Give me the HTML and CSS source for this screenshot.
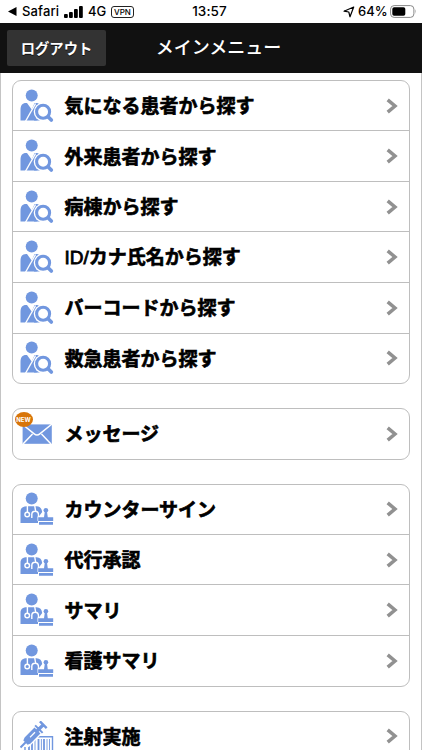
FILE: index.html
```
<!DOCTYPE html>
<html lang="ja">
<head>
<meta charset="utf-8">
<title>メインメニュー</title>
<link rel="stylesheet" href="styles.css">
</head>
<body>
<svg class="defs" aria-hidden="true">
  <symbol id="search" viewBox="0 0 34 34">
    <circle cx="11.7" cy="6.6" r="6"/>
    <path d="M.5 31.5V21C.5 16.5 2.2 14 6.2 14H7L11.7 20.5 14.6 14H16C17.8 14 19 14.6 20 15.5V31.5Z"/>
    <path class="gap" d="M5.4 32.5L15.6 14.5"/>
    <circle class="halo" cx="23.1" cy="22.8" r="9.4"/>
    <circle class="ring" cx="23.1" cy="22.8" r="6.5"/>
    <path d="M14 28.5Q15.5 31 18 31.5H14Z"/>
    <path class="handle" d="M28.3 28L31.3 31"/>
  </symbol>
  <symbol id="doctor" viewBox="0 0 34 34">
    <circle cx="11.7" cy="6.6" r="6"/>
    <path d="M.5 31V19.5C.5 16 3 14.3 7 14.3H16.5C20 14.5 21.8 16.5 22.2 20L18.5 25V31Z"/>
    <path class="steth" d="M7.4 13.5V20M14.7 13.5L15.6 19M11.8 26V22.5Q11.8 19.3 15 19.3Q18.5 19.3 18.5 23V25.5"/>
    <circle class="steth" cx="7.2" cy="22.5" r="2.3"/>
    <path class="outline" d="M18.5 28V25.6H24.3L25 20.5A2.6 2.6 0 1 1 27.2 20.5L27.9 25.6H33V28H32.5V32.7H19V28Z"/>
    <circle cx="25.9" cy="18.2" r="2.3"/>
    <path d="M24.9 19H26.9L27.8 25.3H33.2V28.9H18.2V25.3H24ZM19 30H33V32.7H19Z"/>
  </symbol>
  <symbol id="mail" viewBox="0 0 34 34">
    <path d="M2.6 7.4H31.8V26.8H2.6Z"/>
    <path class="mailline" d="M2 7L14.2 16.8Q17 19 19.8 16.8L32 7M3 27L12.5 17M31 27L21.5 17"/>
  </symbol>
  <symbol id="inject" viewBox="0 0 34 40">
    <path class="frame" d="M10 15.8H32.5V39H5V26"/>
    <path class="bars" d="M9 24V38M12 20V38M18.5 18V38M24 18V38"/>
    <path class="thin" d="M15 18V38M21.4 18V38M27 18V38M29.5 18V38"/>
    <g transform="translate(.5 26.5) rotate(-45)">
      <path class="outline" d="M7 -4.5H24V4.5H7Z"/>
      <path d="M0 -1H7V-3L10 -4.2H24V4.2H10L7 3V1H0ZM24 -1.7H31V1.7H24ZM25 -5.3H27V5.3H25ZM31 -4.8H33.4V4.8H31Z"/>
      <path class="tick" d="M14 -.5H21"/>
    </g>
  </symbol>
  <symbol id="arrow" viewBox="0 0 12 16"><path d="M1.7 1.8L9 8L1.7 14.2"/></symbol>
</svg>

<header class="status">
  <div class="carrier">
    <svg class="back" viewBox="0 0 9 9"><path d="M0 4.5L8.5 0V9Z"/></svg>
    <span class="app">Safari</span>
    <svg class="signal" viewBox="0 0 19 12"><rect y="8" width="3.8" height="4" rx="1"/><rect x="5" y="6" width="3.8" height="6" rx="1"/><rect x="10" y="3" width="3.8" height="9" rx="1"/><rect x="15" width="3.8" height="12" rx="1"/></svg>
    <span class="net">4G</span>
    <span class="vpn">VPN</span>
  </div>
  <div class="time">13:57</div>
  <div class="power">
    <svg class="loc" viewBox="0 0 12 12"><path d="M1 5.2L10.7 1L7 10.8L5.8 6Z"/></svg>
    <span class="percent">64%</span>
    <svg class="battery" viewBox="0 0 27 13"><rect class="shell" x=".6" y=".6" width="23.3" height="11.8" rx="3.5"/><rect x="2.3" y="2.3" width="13" height="8.4" rx="1.8"/><path class="cap" d="M25.2 4.3Q26.6 6.5 25.2 8.7Z"/></svg>
  </div>
</header>

<div class="page">
  <nav class="bar">
    <button class="logout">ログアウト</button>
    <h1 class="title">メインメニュー</h1>
  </nav>
  <main class="menu">
    <ul class="group">
      <li class="row"><svg class="icon"><use href="#search"/></svg><span class="label">気になる患者から探す</span><svg class="arrow"><use href="#arrow"/></svg></li>
      <li class="row"><svg class="icon"><use href="#search"/></svg><span class="label">外来患者から探す</span><svg class="arrow"><use href="#arrow"/></svg></li>
      <li class="row"><svg class="icon"><use href="#search"/></svg><span class="label">病棟から探す</span><svg class="arrow"><use href="#arrow"/></svg></li>
      <li class="row"><svg class="icon"><use href="#search"/></svg><span class="label"><span class="latin">ID/</span>カナ氏名から探す</span><svg class="arrow"><use href="#arrow"/></svg></li>
      <li class="row"><svg class="icon"><use href="#search"/></svg><span class="label">バーコードから探す</span><svg class="arrow"><use href="#arrow"/></svg></li>
      <li class="row"><svg class="icon"><use href="#search"/></svg><span class="label">救急患者から探す</span><svg class="arrow"><use href="#arrow"/></svg></li>
    </ul>
    <ul class="group">
      <li class="row"><svg class="icon"><use href="#mail"/></svg><span class="badge">NEW</span><span class="label">メッセージ</span><svg class="arrow"><use href="#arrow"/></svg></li>
    </ul>
    <ul class="group">
      <li class="row"><svg class="icon"><use href="#doctor"/></svg><span class="label">カウンターサイン</span><svg class="arrow"><use href="#arrow"/></svg></li>
      <li class="row"><svg class="icon"><use href="#doctor"/></svg><span class="label">代行承認</span><svg class="arrow"><use href="#arrow"/></svg></li>
      <li class="row"><svg class="icon"><use href="#doctor"/></svg><span class="label">サマリ</span><svg class="arrow"><use href="#arrow"/></svg></li>
      <li class="row"><svg class="icon"><use href="#doctor"/></svg><span class="label">看護サマリ</span><svg class="arrow"><use href="#arrow"/></svg></li>
    </ul>
    <ul class="group">
      <li class="row"><svg class="icon tall"><use href="#inject"/></svg><span class="label">注射実施</span><svg class="arrow"><use href="#arrow"/></svg></li>
    </ul>
  </main>
</div>
</body>
</html>
```
FILE: styles.css
```
* { box-sizing: border-box; }
html, body { height: 100%; }
body {
  margin: 0;
  overflow: hidden;
  display: flex;
  flex-direction: column;
  background: #fff;
  color: #000;
  font-family: "Noto Sans CJK JP", sans-serif;
}
.defs { display: none; }

.status {
  flex: none;
  height: 23px;
  display: grid;
  grid-template-columns: 1fr auto 1fr;
  align-items: center;
  padding: 0 5px 0 8px;
  font: 500 13px/23px Inter, sans-serif;
}
.carrier, .power { display: flex; align-items: center; }
.power { justify-content: flex-end; }
.back { width: 9px; height: 9px; margin-right: 5px; }
.app { width: 38px; letter-spacing: .15px; }
.signal { width: 19px; height: 12px; margin: 0 5px 0 4px; }
.net { width: 18px; }
.vpn {
  margin-left: 5px;
  width: 23px;
  height: 12px;
  border: 1px solid #222;
  border-radius: 3px;
  font-size: 8px;
  line-height: 10px;
  text-align: center;
}
.time { margin-left: -6px; font-size: 13.5px; letter-spacing: .1px; }
.loc { width: 12px; height: 12px; margin-right: 3px; fill: none; stroke: #000; stroke-width: 1.2; stroke-linejoin: round; }
.percent { width: 30px; font-size: 13px; }
.battery { width: 27px; height: 13px; margin-left: 2px; }
.shell { fill: none; stroke: #888; }
.cap { fill: #888; }

.page {
  flex: 1;
  min-height: 0;
  display: flex;
  flex-direction: column;
  border-left: 1.5px solid #c4c4c4;
  border-right: 1px solid #c4c4c4;
}
.bar {
  flex: none;
  height: 50px;
  margin: 0 -1px;
  padding: 0 7px;
  display: grid;
  grid-template-columns: 99px 1fr 99px;
  align-items: center;
  background: #111;
  color: #fff;
}
.logout {
  height: 36px;
  margin: 0 0 1px;
  padding: 0;
  border: 0;
  border-radius: 2px;
  background: #333;
  color: #fff;
  font: bold 14.3px/36px "Noto Sans CJK JP", sans-serif;
  text-shadow: 0 1px 0 #111;
}
.title {
  margin: 0 0 5px 15px;
  font-size: 18px;
  font-weight: 500;
  line-height: 36px;
  text-align: center;
}
.menu {
  flex: 1;
  min-height: 0;
  overflow: hidden;
  padding: 7px 11px 0 10.5px;
}
.group {
  margin: 0 0 24px;
  padding: 0;
  list-style: none;
  border: 1px solid #bebebe;
  border-radius: 9px;
}
.row {
  position: relative;
  height: 49.3px;
  padding: 0 11px 0 7px;
  display: flex;
  align-items: center;
}
.row + .row { height: 50.6px; border-top: 1px solid #bebebe; }
.icon { flex: none; width: 34px; height: 34px; fill: #7197df; }
.tall { height: 40px; margin-top: 9px; }
.label {
  flex: 1;
  margin: 0 0 1px 11px;
  font-size: 19px;
  font-weight: 700;
  line-height: 28px;
  white-space: nowrap;
  -webkit-text-stroke: .65px #000;
}
.latin { font-family: "Liberation Sans", sans-serif; font-weight: 400; -webkit-text-stroke: .8px #000; }
.arrow { flex: none; width: 12px; height: 16px; fill: none; stroke: #919191; stroke-width: 3.5; }
.badge {
  position: absolute;
  left: 2px;
  top: 3px;
  width: 18px;
  height: 15px;
  border-radius: 50%;
  background: #d87509;
  color: #fff;
  font: 700 6px/15px Inter, sans-serif;
  text-align: center;
}
.gap { fill: none; stroke: #fff; stroke-width: 1.4; }
.halo { fill: #fff; }
.ring { fill: #fff; stroke: #7197df; stroke-width: 3.1; }
.handle { stroke: #7197df; stroke-width: 3.7; stroke-linecap: round; }
.steth { fill: none; stroke: #fff; stroke-width: 1.4; }
.outline { fill: #fff; stroke: #fff; stroke-width: 2; }
.mailline { fill: none; stroke: #fff; stroke-width: 1.5; }
.frame { fill: none; stroke: #7197df; stroke-width: 1.4; }
.bars { stroke: #7197df; stroke-width: 1.8; }
.thin { stroke: #7197df; stroke-width: .9; }
.tick { stroke: #fff; stroke-width: 1.2; }
```
